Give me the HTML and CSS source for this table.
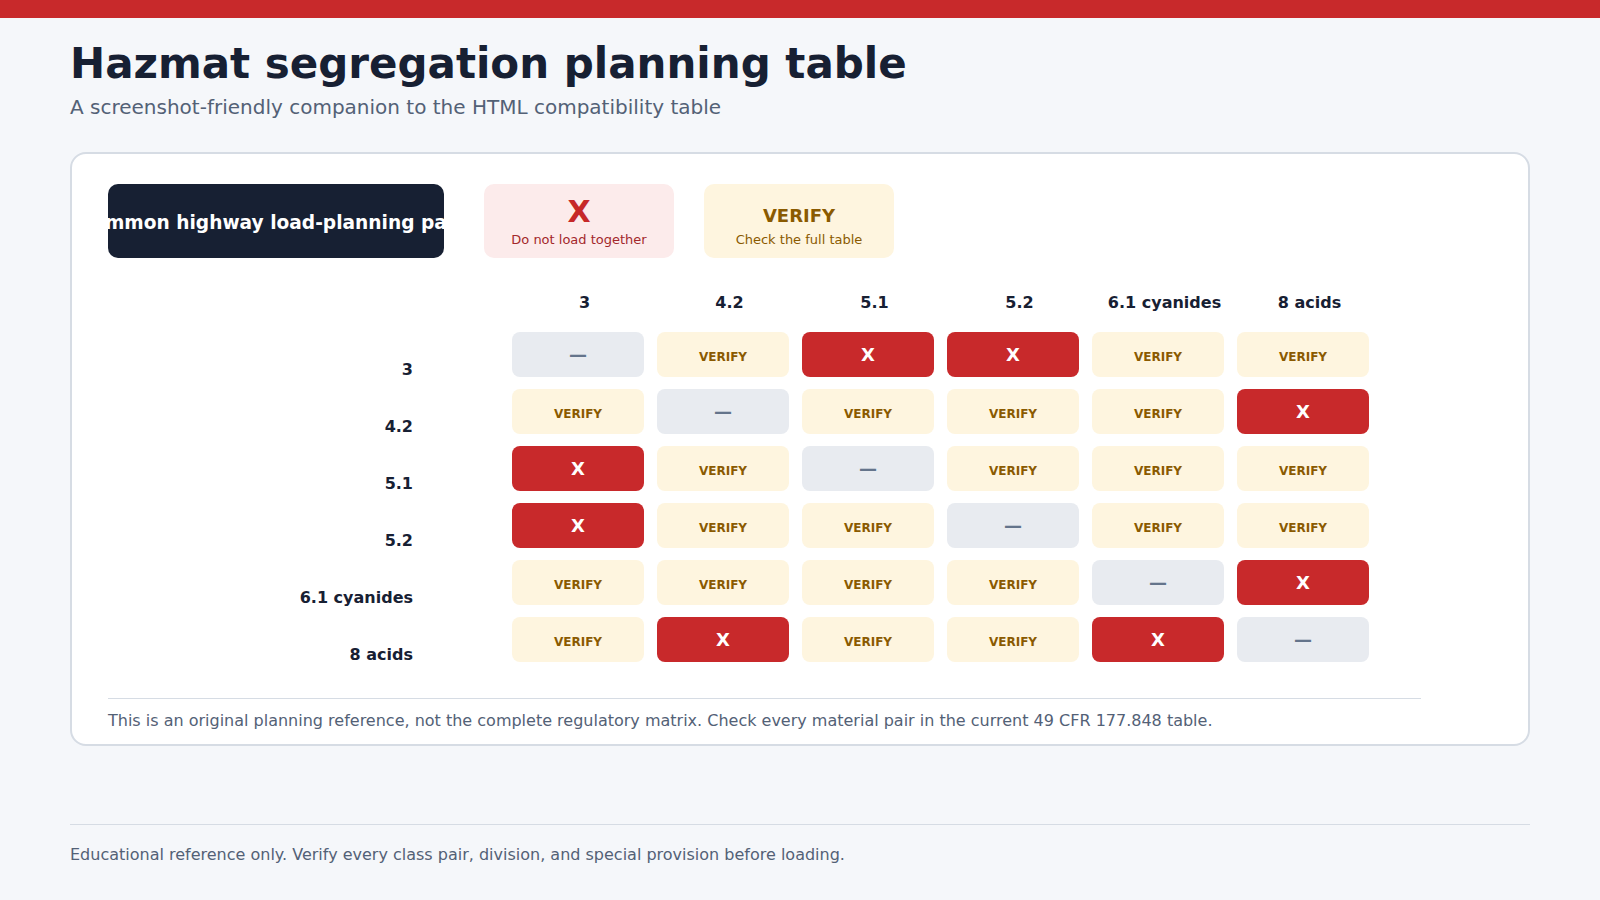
FILE: index.html
```html
<!DOCTYPE html>
<html lang="en">
<head>
<meta charset="utf-8">
<title>Hazmat segregation planning table</title>
<link rel="stylesheet" href="styles.css">
</head>
<body>
<div class="topbar"></div>
<main class="page">
  <header class="intro">
    <h1 class="title">Hazmat segregation planning table</h1>
    <p class="subtitle">A screenshot-friendly companion to the HTML compatibility table</p>
  </header>

  <section class="card">
    <div class="card-inner">
      <div class="legend-row">
        <div class="group-title"><span>Common highway load-planning pairs</span></div>
        <div class="legend">
          <div class="legend-item legend-x">
            <span class="legend-mark">X</span>
            <span class="legend-text">Do not load together</span>
          </div>
          <div class="legend-item legend-verify">
            <span class="legend-mark">VERIFY</span>
            <span class="legend-text">Check the full table</span>
          </div>
        </div>
      </div>

      <div class="matrix">
        <div class="corner"></div>
        <div class="col-head">3</div>
        <div class="col-head">4.2</div>
        <div class="col-head">5.1</div>
        <div class="col-head">5.2</div>
        <div class="col-head">6.1 cyanides</div>
        <div class="col-head">8 acids</div>

        <div class="row-head">3</div>
        <div class="cell same">—</div>
        <div class="cell verify">VERIFY</div>
        <div class="cell no">X</div>
        <div class="cell no">X</div>
        <div class="cell verify">VERIFY</div>
        <div class="cell verify">VERIFY</div>

        <div class="row-head">4.2</div>
        <div class="cell verify">VERIFY</div>
        <div class="cell same">—</div>
        <div class="cell verify">VERIFY</div>
        <div class="cell verify">VERIFY</div>
        <div class="cell verify">VERIFY</div>
        <div class="cell no">X</div>

        <div class="row-head">5.1</div>
        <div class="cell no">X</div>
        <div class="cell verify">VERIFY</div>
        <div class="cell same">—</div>
        <div class="cell verify">VERIFY</div>
        <div class="cell verify">VERIFY</div>
        <div class="cell verify">VERIFY</div>

        <div class="row-head">5.2</div>
        <div class="cell no">X</div>
        <div class="cell verify">VERIFY</div>
        <div class="cell verify">VERIFY</div>
        <div class="cell same">—</div>
        <div class="cell verify">VERIFY</div>
        <div class="cell verify">VERIFY</div>

        <div class="row-head">6.1 cyanides</div>
        <div class="cell verify">VERIFY</div>
        <div class="cell verify">VERIFY</div>
        <div class="cell verify">VERIFY</div>
        <div class="cell verify">VERIFY</div>
        <div class="cell same">—</div>
        <div class="cell no">X</div>

        <div class="row-head">8 acids</div>
        <div class="cell verify">VERIFY</div>
        <div class="cell no">X</div>
        <div class="cell verify">VERIFY</div>
        <div class="cell verify">VERIFY</div>
        <div class="cell no">X</div>
        <div class="cell same">—</div>
      </div>

      <p class="note">This is an original planning reference, not the complete regulatory matrix. Check every material pair in the current 49 CFR 177.848 table.</p>
    </div>
  </section>

  <footer class="footer">
    <p>Educational reference only. Verify every class pair, division, and special provision before loading.</p>
  </footer>
</main>
</body>
</html>
```

FILE: styles.css
```css
* { box-sizing: border-box; }

html, body {
  margin: 0;
  padding: 0;
}

body {
  background: #f5f7fa;
  font-family: "DejaVu Sans", "Liberation Sans", sans-serif;
  color: #172033;
}

.topbar {
  height: 18px;
  background: #c8292b;
}

.page {
  padding: 21px 70px 0;
}

.title {
  margin: 0;
  font-size: 42px;
  line-height: 50px;
  font-weight: 700;
  color: #172033;
}

.subtitle {
  margin: 4px 0 0;
  font-size: 20px;
  line-height: 28px;
  color: #536176;
}

.card {
  margin-top: 31px;
  background: #ffffff;
  border: 2px solid #d6dce4;
  border-radius: 16px;
  padding: 30px 36px 13px;
}

.card-inner {
  width: 1313px;
}

.legend-row {
  display: flex;
  gap: 40px;
  height: 74px;
}

.group-title {
  width: 336px;
  height: 74px;
  padding-top: 3px;
  background: #172033;
  border-radius: 10px;
  color: #ffffff;
  font-size: 18.6px;
  font-weight: 700;
  display: flex;
  align-items: center;
  justify-content: center;
  overflow: hidden;
  white-space: nowrap;
}

.legend {
  display: flex;
  gap: 30px;
}

.legend-item {
  width: 190px;
  height: 74px;
  border-radius: 10px;
  display: flex;
  flex-direction: column;
  align-items: center;
  justify-content: flex-end;
  padding-bottom: 10px;
}

.legend-mark {
  font-weight: 700;
  margin-bottom: 4px;
}

.legend-text {
  font-size: 13px;
  line-height: 16px;
}

.legend-x {
  background: #fcebeb;
}

.legend-x .legend-mark {
  font-size: 30px;
  line-height: 32px;
  color: #c62828;
}

.legend-x .legend-text {
  color: #a3282b;
}

.legend-verify {
  background: #fef5df;
}

.legend-verify .legend-mark {
  font-size: 18px;
  line-height: 22px;
  margin-bottom: 5px;
  color: #8a5a00;
}

.legend-verify .legend-text {
  color: #8a5a00;
}

.matrix {
  margin-top: 35px;
  display: grid;
  grid-template-columns: 404px repeat(6, 145px);
  row-gap: 12px;
}

.col-head {
  text-align: center;
  font-size: 16px;
  line-height: 20px;
  font-weight: 700;
  padding-bottom: 7px;
  color: #172033;
}

.row-head {
  align-self: end;
  text-align: right;
  padding-right: 99px;
  margin-bottom: -1px;
  font-size: 16px;
  line-height: 16px;
  font-weight: 700;
  color: #172033;
}

.cell {
  width: 132px;
  height: 45px;
  border-radius: 8px;
  display: flex;
  align-items: center;
  justify-content: center;
  font-weight: 700;
}

.cell.verify {
  background: #fef5df;
  color: #8a5a00;
  font-size: 12px;
  padding-top: 4px;
}

.cell.no {
  background: #c8292b;
  color: #ffffff;
  font-size: 18px;
}

.cell.same {
  background: #e8ebf0;
  color: #64748b;
  font-size: 18px;
}

.note {
  margin: 36px 0 0;
  border-top: 1px solid #d6dce4;
  padding-top: 12px;
  font-size: 16px;
  line-height: 20px;
  color: #536176;
}

.footer {
  margin-top: 78px;
  border-top: 1px solid #d6dce4;
}

.footer p {
  margin: 0;
  padding-top: 20px;
  font-size: 16px;
  line-height: 20px;
  color: #536176;
}
```
